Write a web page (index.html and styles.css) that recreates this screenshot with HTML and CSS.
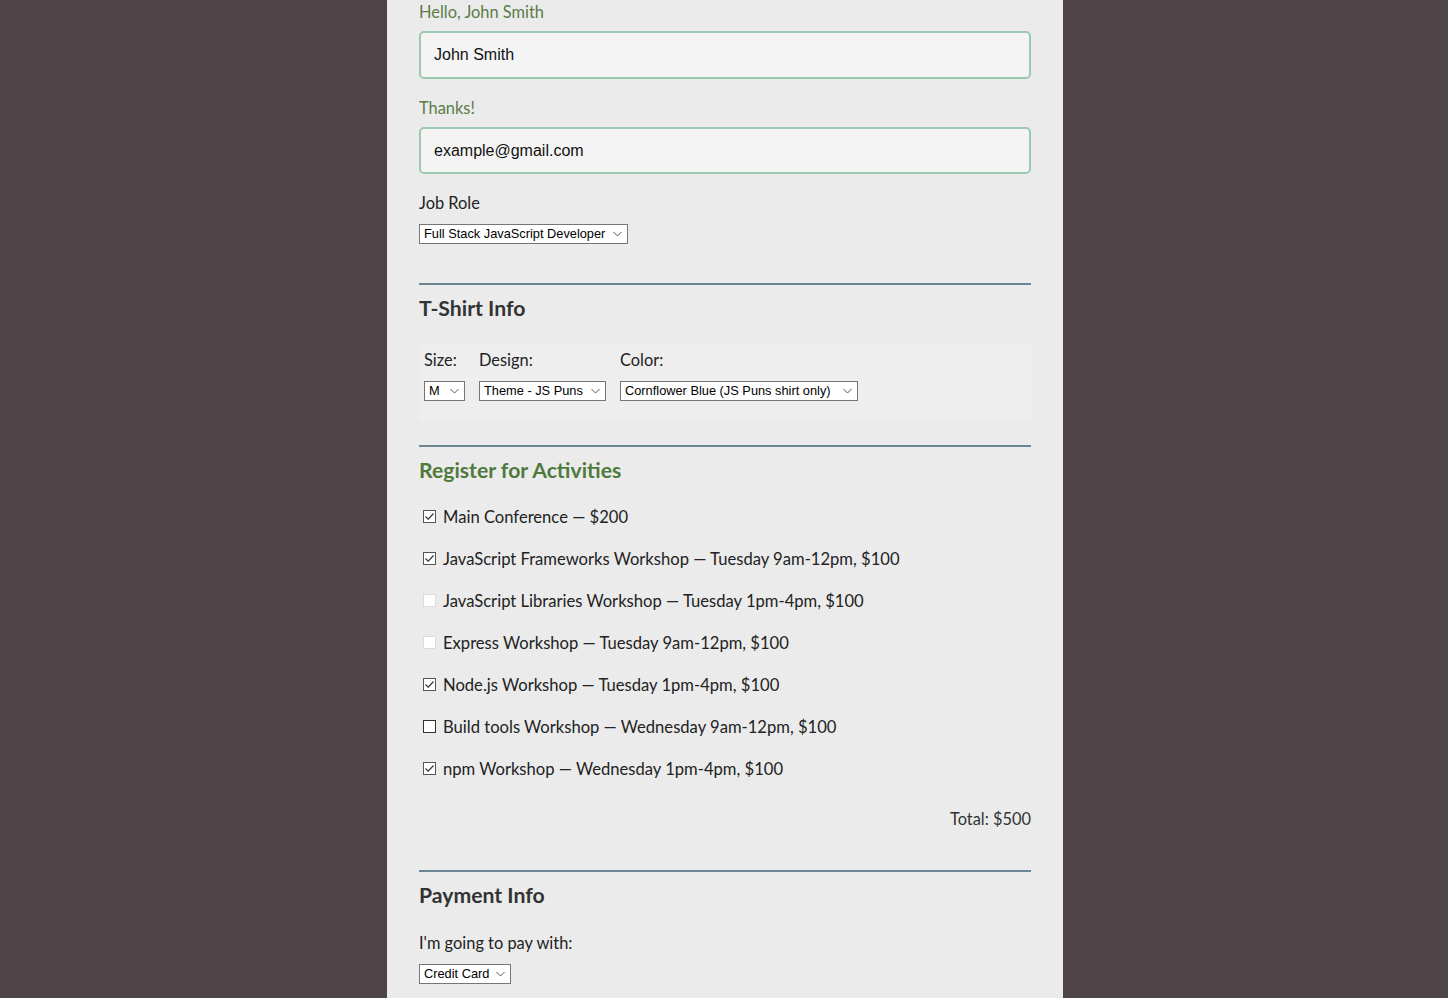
FILE: index.html
```html
<!DOCTYPE html>
<html lang="en">
<head>
<meta charset="utf-8">
<title>Registration</title>
<link rel="stylesheet" href="styles.css">
</head>
<body>
<div class="page">
  <form class="form">
    <fieldset class="basic">
      <label class="field-label ok" for="name">Hello, John Smith</label>
      <input class="text-input" id="name" type="text" value="John Smith">
      <label class="field-label ok" for="mail">Thanks!</label>
      <input class="text-input" id="mail" type="email" value="example@gmail.com">
      <label class="field-label" for="title">Job Role</label>
      <div class="select-wrap"><select id="title" class="sel"><option>Full Stack JavaScript Developer</option></select></div>
    </fieldset>

    <fieldset class="section shirt">
      <h2 class="section-title">T-Shirt Info</h2>
      <div class="shirt-box">
        <div class="shirt-col">
          <label class="small-label" for="size">Size:</label>
          <select id="size" class="sel sel-size"><option>M</option></select>
        </div>
        <div class="shirt-col">
          <label class="small-label" for="design">Design:</label>
          <select id="design" class="sel sel-design"><option>Theme - JS Puns</option></select>
        </div>
        <div class="shirt-col">
          <label class="small-label" for="color">Color:</label>
          <select id="color" class="sel sel-color"><option>Cornflower Blue (JS Puns shirt only)</option></select>
        </div>
      </div>
    </fieldset>

    <fieldset class="section activities">
      <h2 class="section-title green">Register for Activities</h2>
      <ul class="act-list">
        <li class="act"><span class="box checked"><svg viewBox="0 0 13 13" width="13" height="13"><path d="M2.5 6.5 L5.2 9.2 L10.5 3.5" fill="none" stroke="#333" stroke-width="1.2"/></svg></span>Main Conference — $200</li>
        <li class="act"><span class="box checked"><svg viewBox="0 0 13 13" width="13" height="13"><path d="M2.5 6.5 L5.2 9.2 L10.5 3.5" fill="none" stroke="#333" stroke-width="1.2"/></svg></span>JavaScript Frameworks Workshop — Tuesday 9am-12pm, $100</li>
        <li class="act"><span class="box disabled"></span>JavaScript Libraries Workshop — Tuesday 1pm-4pm, $100</li>
        <li class="act"><span class="box disabled"></span>Express Workshop — Tuesday 9am-12pm, $100</li>
        <li class="act"><span class="box checked"><svg viewBox="0 0 13 13" width="13" height="13"><path d="M2.5 6.5 L5.2 9.2 L10.5 3.5" fill="none" stroke="#333" stroke-width="1.2"/></svg></span>Node.js Workshop — Tuesday 1pm-4pm, $100</li>
        <li class="act"><span class="box empty"></span>Build tools Workshop — Wednesday 9am-12pm, $100</li>
        <li class="act"><span class="box checked"><svg viewBox="0 0 13 13" width="13" height="13"><path d="M2.5 6.5 L5.2 9.2 L10.5 3.5" fill="none" stroke="#333" stroke-width="1.2"/></svg></span>npm Workshop — Wednesday 1pm-4pm, $100</li>
      </ul>
      <p class="total">Total: $500</p>
    </fieldset>

    <fieldset class="section payment">
      <h2 class="section-title">Payment Info</h2>
      <label class="field-label pay-label" for="payment">I'm going to pay with:</label>
      <div class="select-wrap"><select id="payment" class="sel"><option>Credit Card</option></select></div>
    </fieldset>
  </form>
</div>
</body>
</html>
```

FILE: styles.css
```css
html, body {
  margin: 0;
  padding: 0;
}
body {
  background: #4f4448;
  font-family: "Lato", "Noto Sans", sans-serif;
  color: #222;
}
.page {
  width: 676px;
  margin-left: calc(50% - 337px);
  background: #ebebeb;
  min-height: 998px;
  box-sizing: border-box;
  padding: 0 32px;
}
.form {
  margin: 0;
}
fieldset {
  border: 0;
  margin: 0;
  padding: 0;
}
.basic {
  display: flex;
  flex-direction: column;
  align-items: flex-start;
  padding-top: 1px;
}
.field-label {
  font-size: 16.4px;
  line-height: 20px;
  padding-top: 1px;
  color: #222;
  display: block;
}
.field-label.ok {
  color: #5c7c47;
}
.text-input {
  box-sizing: border-box;
  width: 612px;
  height: 48px;
  border: 2px solid #9ccab0;
  border-radius: 5px;
  background: #f4f4f4;
  font-family: "Liberation Sans", Arial, sans-serif;
  font-size: 16px;
  color: #111;
  padding: 0 13px;
  margin: 9px 0 18px;
  outline: none;
}
#mail {
  height: 47px;
}
.select-wrap {
  display: flex;
  margin-top: 11px;
}
.sel {
  appearance: none;
  -webkit-appearance: none;
  box-sizing: border-box;
  height: 20px;
  border: 1px solid #767676;
  border-radius: 0;
  background: #fff url("data:image/svg+xml,%3Csvg xmlns='http://www.w3.org/2000/svg' width='9' height='6' viewBox='0 0 9 6'%3E%3Cpath d='M0.5 1 L4.5 5 L8.5 1' fill='none' stroke='%23555' stroke-width='1'/%3E%3C/svg%3E") no-repeat right 5px center;
  font-family: "Liberation Sans", Arial, sans-serif;
  font-size: 12.8px;
  color: #000;
  padding: 0 14px 0 4px;
  line-height: 18px;
  margin: 0;
}
#title { width: 209px; }
#payment { width: 92px; }
.section {
  border-top: 2px solid #6a8593;
  margin-top: 39px;
  padding-top: 11px;
}
.section-title {
  font-size: 21.2px;
  font-weight: 700;
  line-height: 24px;
  color: #333;
  margin: 0;
}
.section-title.green {
  color: #4e7a3c;
}
.shirt-box {
  margin-top: 24px;
  background: #eeeeee;
  border-radius: 3px;
  height: 76px;
  box-sizing: border-box;
  padding: 5px 5px 0;
  display: flex;
  gap: 14px;
}
.shirt-col {
  display: flex;
  flex-direction: column;
  align-items: flex-start;
}
.small-label {
  font-size: 16.4px;
  line-height: 20px;
  padding-top: 1px;
  color: #222;
  margin-bottom: 11px;
}
.sel-size { width: 41px; }
.sel-design { width: 127px; }
.sel-color { width: 238px; }
.activities {
  margin-top: 25px;
}
.act-list {
  list-style: none;
  margin: 25px 0 0;
  padding: 0;
}
.act {
  display: flex;
  align-items: center;
  height: 42px;
  font-size: 16.6px;
  color: #222;
}
.act:first-child { margin-top: -11px; }
.box {
  box-sizing: border-box;
  flex: none;
  width: 13px;
  height: 13px;
  margin: -1px 7px 0 4px;
  background: #fff;
  border: 1px solid #333;
  display: inline-flex;
  position: relative;
}
.box svg {
  position: absolute;
  left: -1px;
  top: -1px;
}
.box.checked {
  border-color: #555;
}
.box.disabled {
  border-color: #dcdcdc;
}
.total {
  text-align: right;
  font-size: 16.4px;
  line-height: 20px;
  color: #333;
  margin: 19px 0 0;
}
.payment {
  margin-top: 41px;
}
.pay-label {
  margin-top: 25px;
}
```
